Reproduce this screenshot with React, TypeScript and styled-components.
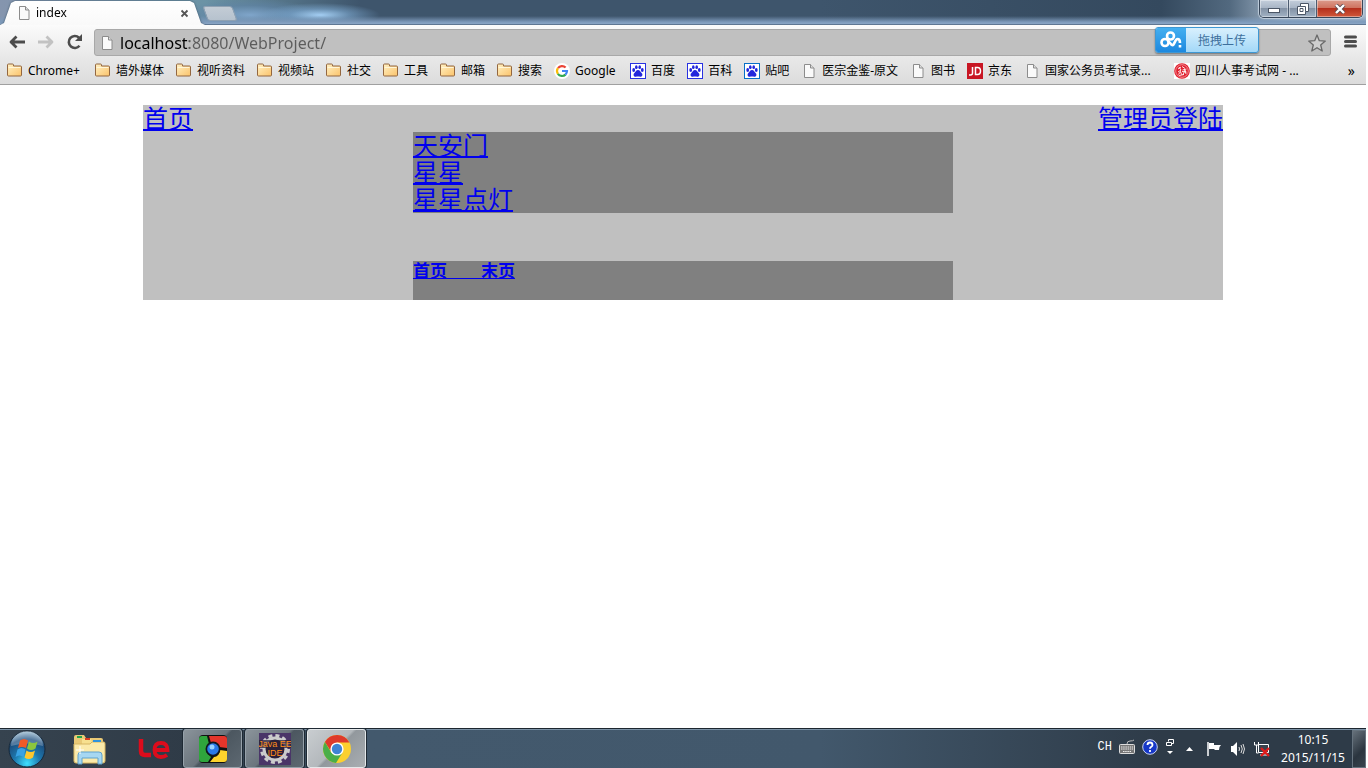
import React from "react";
import styled, { createGlobalStyle } from "styled-components";

const uiFont = '"Noto Sans", "Noto Sans CJK SC", sans-serif';

const GlobalStyle = createGlobalStyle`
  * { box-sizing: border-box; }
  body { margin: 0; background: #fff; font-family: ${uiFont}; font-size: 12px; color: #000; }
  button { font: inherit; color: inherit; padding: 0; border: 0; background: none; }
  svg { display: block; flex: none; }
`;

const Desktop = styled.div`
  display: flex;
  flex-direction: column;
  min-height: 100vh;
  padding-right: 2px;
`;

/* ---------- window frame ---------- */

const TitleBar = styled.header`
  display: flex;
  align-items: flex-end;
  height: 25px;
  background:
    linear-gradient(to bottom, transparent 16px, #7d9abb 22px, #8aa6c6 24px, #5f7793 24px),
    radial-gradient(ellipse 60px 12px at 320px 15px, #a3cdf2 0%, rgba(124, 168, 208, 0.6) 50%, transparent 100%),
    radial-gradient(ellipse 70px 16px at 250px 15px, #7fa5ca 0%, rgba(95, 131, 166, 0.6) 60%, transparent 100%),
    linear-gradient(to right, #8595ae 0, #6b93a5 205px, #3e556c 360px, #3e556c 60%, #34495e 85%, #52697f 90%, #a4b6c9 94%, #a9b9cb 100%);
`;

const TabShadow = styled.div`
  width: 205px;
  filter: drop-shadow(0 0 1px #3d5468);
`;

const Tab = styled.div`
  display: flex;
  align-items: center;
  height: 24px;
  padding: 0 16px;
  gap: 4px;
  background: linear-gradient(#fff, #f9f9f9);
  clip-path: polygon(0 100%, 4px 92%, 11px 8%, 15px 0, calc(100% - 15px) 0, calc(100% - 11px) 8%, calc(100% - 4px) 92%, 100% 100%);
`;

const TabTitle = styled.span`
  flex: 1;
  line-height: 16px;
`;

const NewTab = styled.button`
  width: 30px;
  height: 15px;
  margin-bottom: 4px;
  border-radius: 3px;
  border: 1px solid #8fa1b2;
  background: linear-gradient(#c3ccd5, #b6c2ce);
  transform: skewX(20deg);
`;

const WindowButtons = styled.div`
  display: flex;
  align-self: flex-start;
  margin: 0 3px 0 auto;
  height: 18px;
  border: 1px solid #38475a;
  border-top: 0;
  border-radius: 0 0 5px 5px;
  overflow: hidden;
  box-shadow: 0 0 1px 1px #c3d0de;
`;

const WindowButton = styled.button<{ $close?: boolean }>`
  display: flex;
  align-items: center;
  justify-content: center;
  width: ${(p) => (p.$close ? 46 : 28)}px;
  border-left: 1px solid #4c5c70;
  box-shadow: inset 0 0 0 1px rgba(255, 255, 255, 0.4);
  background: ${(p) =>
    p.$close
      ? "linear-gradient(#dc9c8c 0, #cf7460 45%, #b5301c 50%, #d0583a 100%)"
      : "linear-gradient(#c4cfdc 0, #a9b6c6 45%, #8392a5 50%, #a2b2c4 100%)"};
  &:first-child { border-left: 0; }
`;

/* ---------- toolbar ---------- */

const Toolbar = styled.div`
  position: relative;
  display: flex;
  align-items: center;
  height: 33px;
  padding: 0 9px 0 7px;
  background: linear-gradient(#fbfbfb, #e8e8e8);
`;

const NavButtons = styled.div`
  display: flex;
  gap: 9px;
  width: 87px;
`;

const IconButton = styled.button`
  display: flex;
  align-items: center;
  justify-content: center;
`;

const Omnibox = styled.label`
  display: flex;
  flex: 1;
  align-items: center;
  gap: 5px;
  height: 27px;
  padding: 0 4px;
  border: 1px solid #a8a8a8;
  border-radius: 3px;
  background: #c0c0c0;
  margin: 2px 13px 0 0;
`;

const UrlInput = styled.input`
  flex: 1;
  min-width: 0;
  height: 24px;
  padding: 0;
  border: 0;
  outline: 0;
  font: 16px/24px ${uiFont};
  color: transparent;
  caret-color: #000;
  background: linear-gradient(to right, #000 69px, #5c5c5c 69px);
  -webkit-background-clip: text;
  background-clip: text;
`;

const UploadButton = styled.button`
  position: absolute;
  top: 2px;
  right: 107px;
  display: flex;
  width: 104px;
  height: 26px;
  border: 1px solid #3e97d3;
  border-radius: 3px;
  overflow: hidden;
  box-shadow: 0 1px 2px rgba(0, 0, 0, 0.4);
  color: #3d6f9c;
  line-height: 26px;
  background: linear-gradient(#d9f0fd, #a3d8f8);
`;

const UploadLogo = styled.span`
  display: flex;
  align-items: center;
  justify-content: center;
  width: 30px;
  height: 100%;
  background: linear-gradient(#43aff0, #1c88df);
`;

const UploadText = styled.span`
  flex: 1;
`;

/* ---------- bookmarks ---------- */

const Bookmarks = styled.nav`
  display: flex;
  align-items: center;
  gap: 12px;
  height: 27px;
  padding: 0 11px 0 7px;
  border-bottom: 1px solid #a0a0a0;
  background: linear-gradient(#e8e8e8, #dcdcdc);
`;

const Bookmark = styled.a<{ $width?: number }>`
  display: flex;
  align-items: center;
  gap: 5px;
  flex: none;
  width: ${(p) => (p.$width ? `${p.$width}px` : "auto")};
  color: #000;
  text-decoration: none;
  line-height: 16px;
  white-space: nowrap;
`;

const More = styled.button`
  margin-left: auto;
  font-size: 14px;
  line-height: 16px;
`;

/* ---------- web page ---------- */

const Page = styled.main`
  flex: 1;
  padding: 20px 0;
`;

const Sheet = styled.div`
  width: 100%;
  max-width: 1080px;
  margin: 0 auto;
  background: #c0c0c0;
`;

const SheetHeader = styled.div`
  display: flex;
  justify-content: space-between;
  height: 27px;
`;

const PageLink = styled.a`
  color: #0000ee;
  font-family: "Noto Sans CJK SC", sans-serif;
  font-size: 25px;
  font-weight: 400;
  line-height: 25px;
  text-decoration-thickness: 2px;
  text-underline-offset: 1px;
`;

const Articles = styled.ul`
  width: 50%;
  margin: 0 auto 48px;
  padding: 0;
  list-style: none;
  background: #808080;
`;

const Article = styled.li`
  display: flex;
  align-items: flex-start;
  height: 27px;
`;

const Pager = styled.div`
  width: 50%;
  height: 39px;
  margin: 0 auto;
  background: #808080;
`;

const PagerLink = styled.a`
  display: block;
  color: #0000ee;
  font: bold 17px/17px "Noto Sans CJK SC", sans-serif;
  text-decoration-thickness: 1px;
  text-underline-offset: 1px;
`;

/* ---------- taskbar ---------- */

const Taskbar = styled.footer`
  display: flex;
  align-items: center;
  height: 40px;
  color: #fff;
  border-top: 1px solid #1c262f;
  background: linear-gradient(to right, #36434f 0, #2f3b47 190px, #43596d 370px, #42586c 60%, #2e3b48 85%, #2e3b48 100%);
  box-shadow: inset 0 1px 0 #7b92a6;
`;

const Launcher = styled.button<{ $w: number }>`
  display: flex;
  align-items: center;
  justify-content: center;
  width: ${(p) => p.$w}px;
  height: 39px;
`;

const TaskButton = styled.button<{ $active?: boolean }>`
  display: flex;
  align-items: center;
  justify-content: center;
  width: 59px;
  height: 39px;
  margin-right: 3px;
  border: 1px solid ${(p) => (p.$active ? "#e4e8ea" : "#96a1aa")};
  border-radius: 3px;
  box-shadow: 0 0 0 1px #1f2a34;
  background: ${(p) =>
    p.$active
      ? "linear-gradient(135deg, #c9cdd0 0, #b3b8bc 48%, #92989d 52%, #a9aeb2 100%)"
      : "linear-gradient(135deg, #8b949b 0, #6b757d 48%, #4c5760 52%, #5d6871 100%)"};
`;

const LanguageBar = styled.div`
  display: flex;
  align-items: center;
  gap: 7px;
  margin: 0 7px 4px auto;
  font: 12px/16px "Liberation Mono", monospace;
`;

const Tray = styled.div`
  display: flex;
  align-items: center;
  gap: 8px;
`;

const Clock = styled.time`
  width: 86px;
  text-align: center;
  line-height: 18px;
  margin-right: -4px;
`;

const ShowDesktop = styled.button`
  width: 14px;
  height: 38px;
  border: 1px solid #66737e;
  background: linear-gradient(135deg, #66717b, #2b353f 60%, #38434d);
`;

/* ---------- drawings ---------- */

const FileIcon = () => (
  <svg width="16" height="16" viewBox="0 0 16 16">
    <path d="M3.5 1.5h6l3.5 3.5v9.5h-9.500z" fill="#fafafa" stroke="#8c8c8c" />
    <path d="M9.500 1.500v3.500H13" fill="#ddd" stroke="#8c8c8c" />
  </svg>
);

const FolderIcon = () => (
  <svg width="16" height="16" viewBox="0 0 16 16">
    <defs>
      <linearGradient id="folder" x2="1" y2="1">
        <stop offset="0" stopColor="#fff1c4" />
        <stop offset="1" stopColor="#fbc36b" />
      </linearGradient>
    </defs>
    <path d="M.5 3V2q0-1 1-1h4q1 0 1 1v1h7q1 0 1 1v8q0 1-1 1h-12q-1 0-1-1z" fill="url(#folder)" stroke="#936740" />
    <path d="M1.500 4.500h12" stroke="#fff6d8" />
  </svg>
);

const GoogleIcon = () => (
  <svg width="16" height="16" viewBox="0 0 16 16">
    <circle cx="8" cy="8" r="8" fill="#fff" />
    <g fill="none" strokeWidth="2.200">
      <path d="M4 5.200A5 5 0 0 1 11.600 4.500" stroke="#ea4335" />
      <path d="M3.900 10.800A5 5 0 0 1 3.900 5.200" stroke="#fbbc05" />
      <path d="M11.500 11.600A5 5 0 0 1 3.900 10.800" stroke="#34a853" />
      <path d="M8 8h5A5 5 0 0 1 11.400 11.600" stroke="#4285f4" />
    </g>
  </svg>
);

const PawIcon = ({ edge = "#2932e1" }: { edge?: string }) => (
  <svg width="16" height="16" viewBox="0 0 16 16">
    <rect x=".5" y=".5" width="15" height="15" fill="#fff" stroke={edge} />
    <g fill="#2226dc">
      <ellipse cx="3.700" cy="7" rx="1.400" ry="1.900" />
      <ellipse cx="6.300" cy="4.200" rx="1.300" ry="1.900" />
      <ellipse cx="9.700" cy="4.200" rx="1.300" ry="1.900" />
      <ellipse cx="12.300" cy="7" rx="1.400" ry="1.900" />
      <path d="M8 7c2 0 2.500 2 3.800 3.200 1.400 1.600.2 3.800-1.600 3.600-1.500-.3-2.900-.3-4.400 0-1.800.2-3-2-1.600-3.600C5.500 9 6 7 8 7z" />
    </g>
  </svg>
);

const JdIcon = () => (
  <svg width="16" height="16" viewBox="0 0 16 16">
    <rect width="16" height="16" fill="#c81623" />
    <path d="M5.500 4v6q0 2-2 2H2M8.500 4.500v7h2q3 0 3-3.500t-3-3.500z" fill="none" stroke="#fff" strokeWidth="1.500" />
  </svg>
);

const SealIcon = () => (
  <svg width="16" height="16" viewBox="0 0 16 16">
    <rect width="16" height="16" fill="#fff" />
    <circle cx="8" cy="8" r="7.800" fill="#e01f2d" />
    <circle cx="8" cy="8" r="6.300" fill="none" stroke="#f7b9bd" strokeWidth=".7" />
    <path d="M4 6l3-2M5 4l2 3M4 9l3-2M4.500 11.500l2-3 1 3M8 3.500l3 2M8.500 7l4-1M8 8.500l4.500.5M9 12l2-5 1 4M5 12.500l5-1" fill="none" stroke="#fff" strokeWidth=".9" />
  </svg>
);

const BackIcon = ({ color, flip }: { color: string; flip?: boolean }) => (
  <svg width="20" height="20" viewBox="0 0 20 20">
    <path d={flip ? "M2 10h14M10.500 4.500 16 10l-5.500 5.500" : "M18 10H4M9.500 4.500 4 10l5.500 5.500"} fill="none" stroke={color} strokeWidth="2.800" strokeLinejoin="round" />
  </svg>
);

const ReloadIcon = () => (
  <svg width="20" height="20" viewBox="0 0 20 20">
    <path d="M14.500 13.800A6 6 0 1 1 14 5.700" fill="none" stroke="#4c4c4c" strokeWidth="2.600" />
    <path d="M17 2v7h-7z" fill="#4c4c4c" />
  </svg>
);

const StarIcon = () => (
  <svg width="18" height="18" viewBox="0 0 18 18">
    <path d="M9 1l2.300 5.700 6 .4-4.600 3.900 1.500 6L9 13.700 3.800 17l1.500-6L.7 7.100l6-.4z" fill="#cfcfcf" stroke="#696969" strokeWidth="1.300" strokeLinejoin="round" />
  </svg>
);

const MenuIcon = () => (
  <svg width="13" height="13" viewBox="0 0 13 13">
    <path d="M1.500 2h10M1.500 6.500h10M1.500 11h10" stroke="#4c4c4c" strokeWidth="3" strokeLinecap="round" />
  </svg>
);

const CloudIcon = () => (
  <svg width="22" height="18" viewBox="0 0 22 18" fill="none" stroke="#fff" strokeWidth="2.600">
    <circle cx="10.500" cy="5" r="3.500" />
    <circle cx="5" cy="11.500" r="3.500" />
    <path d="M7.800 9.500l4 4.500c2.500 1.500 3-6 5.700-6 1.800 0 2.500 1.500 2.500 4M20 14v2.400" />
  </svg>
);

const StartOrb = () => (
  <svg width="40" height="38" viewBox="0 0 40 38">
    <defs>
      <radialGradient id="orb" cx=".5" cy=".9" r=".9">
        <stop offset="0" stopColor="#3fe0ff" />
        <stop offset=".4" stopColor="#1d78ae" />
        <stop offset=".75" stopColor="#1c4d7d" />
        <stop offset="1" stopColor="#a3c3d6" />
      </radialGradient>
    </defs>
    <circle cx="20" cy="19" r="18" fill="url(#orb)" stroke="#16283a" />
    <path d="M4 16a16 15 0 0 1 32 0q-16-5-32 0z" fill="#fff" opacity=".25" />
    <path d="M13 10.500q4-3 8 0l-2 7.500q-4-2-8 0z" fill="#ef5a28" />
    <path d="M22 11.500q4 3 8.500 0l-2 7q-4.500 3-8.500 0z" fill="#8cc63e" />
    <path d="M10.500 19.500q4-3 8 0l-2 7.500q-4-3-8 0z" fill="#38a2e4" />
    <path d="M19.500 20.500q4 3 8.500 0l-2 7q-4.500 3-8.500 0z" fill="#fdc72e" />
  </svg>
);

const ExplorerIcon = () => (
  <svg width="34" height="32" viewBox="0 0 34 32">
    <path d="M2 4q0-2 2-2h8l2 3h15q2 0 2 2v20H2z" fill="#e9c976" />
    <path d="M10 6h9l1 3h11v18H10z" fill="#f7e08f" />
    <path d="M2 11h16l2-2h12q1 0 1 2v17q0 2-2 2H4q-2 0-2-2z" fill="#fbeaaa" stroke="#d7b662" />
    <path d="M5 4h5" stroke="#21a34a" strokeWidth="2" />
    <path d="M13 6h5" stroke="#d83b20" strokeWidth="2" />
    <path d="M21 8h8" stroke="#3093dc" strokeWidth="2" />
    <path d="M6 31V22q0-3 3-3h18q3 0 3 3v9h-4v-6H10v6z" fill="#a6d7f2" stroke="#5fa2ce" />
    <path d="M8 13v8M4 17h8" stroke="#fff" />
  </svg>
);

const LeIcon = () => (
  <svg width="32" height="22" viewBox="0 0 32 22" fill="none" stroke="#dc0c1c">
    <path d="M3 1v12q0 4 4 4h6" strokeWidth="4.500" />
    <path d="M16 12h13.500q0-7-6.500-7t-6.500 7 6.500 7q3.500 0 6-2" strokeWidth="3.800" />
  </svg>
);

const SquareBrowserIcon = () => (
  <svg width="30" height="30" viewBox="0 0 30 30">
    <rect x="1" y="1" width="28" height="28" rx="4" fill="#111" />
    <path d="M11 2h15q3 0 3 3v9l-8-1q-3-5-8-4z" fill="#e5352b" />
    <path d="M4 2h5l2 8q-5 4-2 9l4 4-3 5H4q-3 0-3-3V5q0-3 3-3z" fill="#2fa53c" />
    <path d="M22 16l7 1v8q0 3-3 3H12l4-5q5 0 6-7z" fill="#fdd32d" />
    <circle cx="15" cy="15" r="7.500" fill="#101820" />
    <circle cx="15" cy="15" r="5.800" fill="#2a79e8" />
    <circle cx="14" cy="13" r="2.500" fill="#9bd4ff" />
  </svg>
);

const EclipseIcon = () => (
  <svg width="32" height="32" viewBox="0 0 32 32">
    <rect width="32" height="32" fill="#4a3568" />
    <circle cx="16" cy="16" r="13.500" fill="none" stroke="#ccc" strokeWidth="3" strokeDasharray="4 3.070" />
    <circle cx="16" cy="16" r="11" fill="#2b2038" stroke="#ccc" strokeWidth="3" />
    <rect y="7" width="32" height="8" fill="#2b2038" opacity=".75" />
    <g fill="#ff8c1a" fontFamily="Liberation Sans, sans-serif" fontSize="9" textAnchor="middle">
      <text x="16" y="14">Java EE</text>
      <text x="16" y="23">IDE</text>
    </g>
  </svg>
);

const ChromeIcon = () => (
  <svg width="30" height="30" viewBox="0 0 30 30">
    <circle cx="15" cy="15" r="14" fill="#fbd02f" />
    <path d="M15 8.500h12.400A14 14 0 0 0 2.900 8L9.400 18z" fill="#de3a2c" />
    <path d="M2.900 8A14 14 0 0 0 14 29l6.500-10.500-11 .5z" fill="#4aae48" />
    <circle cx="15" cy="15" r="6.600" fill="#fff" />
    <circle cx="15" cy="15" r="5.200" fill="#3f83d3" />
  </svg>
);

const KeyboardIcon = () => (
  <svg width="16" height="16" viewBox="0 0 16 16">
    <path d="M8 5q0-3 3-3t4-1" fill="none" stroke="#bbb" />
    <rect x=".5" y="5.500" width="15" height="9" rx="1" fill="#777" stroke="#ddd" />
    <path d="M2 8h12M2 10h12M4 12.500h8" stroke="#eee" strokeDasharray="1.500 .7" />
  </svg>
);

const HelpIcon = () => (
  <svg width="16" height="16" viewBox="0 0 16 16">
    <circle cx="8" cy="8" r="7.300" fill="#1637c8" stroke="#c7d1f0" />
    <path d="M5.500 6q0-2.500 2.500-2.500T10.500 6q0 1.200-1.500 2-1 .6-1 1.800M8 11v2" fill="none" stroke="#fff" strokeWidth="1.800" />
  </svg>
);

const RestoreIcon = () => (
  <svg width="10" height="16" viewBox="0 0 10 16">
    <path d="M3.500 2.500v-2h5v4h-2M1.500 3.500h5v3h-5z" fill="none" stroke="#fff" />
    <path d="M2 12h6l-3 3z" fill="#fff" />
  </svg>
);

const HiddenIconsArrow = () => (
  <svg width="16" height="16" viewBox="0 0 16 16">
    <path d="M4 10h7l-3.500-4z" fill="#fff" />
  </svg>
);

const FlagIcon = () => (
  <svg width="16" height="16" viewBox="0 0 16 16">
    <path d="M2 1v14" stroke="#fff" strokeWidth="1.500" />
    <path d="M3 2h5v2h7l-1.500 2L13 9H9L8 8H3z" fill="#fff" />
  </svg>
);

const SpeakerIcon = () => (
  <svg width="16" height="16" viewBox="0 0 16 16">
    <path d="M1 5h2l4-4v14l-4-4H1z" fill="#fff" />
    <path d="M9 6q1 2 0 4M11 4q2.500 4 0 8M13 3q3 5 0 10" fill="none" stroke="#ddd" />
  </svg>
);

const NetworkIcon = () => (
  <svg width="16" height="16" viewBox="0 0 16 16">
    <path d="M.5 1v3h4V1M2.500 4v8h2" fill="none" stroke="#fff" />
    <path d="M4.500 3.500h10v8h-10zM6 14h7" fill="#39444f" stroke="#fff" />
    <path d="M7 7l8 8M15 7l-8 8" stroke="#e11b1b" strokeWidth="2.400" />
  </svg>
);

type BookmarkItem = { label: string; icon: React.ReactNode; width?: number };

const folders: BookmarkItem[] = [
  { label: "Chrome+", icon: <FolderIcon />, width: 76 },
  ...["墙外媒体", "视听资料", "视频站", "社交", "工具", "邮箱", "搜索"].map((label) => ({ label, icon: <FolderIcon /> })),
];

const sites: BookmarkItem[] = [
  { label: "Google", icon: <GoogleIcon />, width: 64 },
  { label: "百度", icon: <PawIcon /> },
  { label: "百科", icon: <PawIcon /> },
  { label: "贴吧", icon: <PawIcon edge="#0870c8" /> },
  { label: "医宗金鉴-原文", icon: <FileIcon /> },
  { label: "图书", icon: <FileIcon /> },
  { label: "京东", icon: <JdIcon /> },
  { label: "国家公务员考试录...", icon: <FileIcon />, width: 138 },
  { label: "四川人事考试网 - ...", icon: <SealIcon /> },
];

const articles = ["天安门", "星星", "星星点灯"];

export default function App() {
  return (
    <Desktop>
      <GlobalStyle />
      <TitleBar>
        <TabShadow>
          <Tab>
            <FileIcon />
            <TabTitle>index</TabTitle>
            <IconButton aria-label="Close tab">
              <svg width="9" height="9" viewBox="0 0 9 9">
                <path d="M1.500 1.500l6 6M7.500 1.500l-6 6" stroke="#555" strokeWidth="1.800" />
              </svg>
            </IconButton>
          </Tab>
        </TabShadow>
        <NewTab aria-label="New tab" />
        <WindowButtons>
          <WindowButton aria-label="Minimize">
            <svg width="12" height="10" viewBox="0 0 12 10">
              <rect x=".5" y="4.500" width="11" height="4" fill="#fff" stroke="#4b5666" />
            </svg>
          </WindowButton>
          <WindowButton aria-label="Restore">
            <svg width="12" height="12" viewBox="0 0 12 12">
              <path d="M3.500.5h8v8h-3v3h-8v-8h3z" fill="#fff" stroke="#4b5666" />
              <path d="M3 5.500h3v3H3zM3.500 3.500h5v5" fill="none" stroke="#4b5666" />
            </svg>
          </WindowButton>
          <WindowButton $close aria-label="Close">
            <svg width="12" height="10" viewBox="0 0 12 10">
              <path d="M2 1l8 8M10 1L2 9" stroke="#5a4a50" strokeWidth="4" />
              <path d="M2 1l8 8M10 1L2 9" stroke="#fff" strokeWidth="2.400" />
            </svg>
          </WindowButton>
        </WindowButtons>
      </TitleBar>

      <Toolbar>
        <NavButtons>
          <IconButton aria-label="Back"><BackIcon color="#4c4c4c" /></IconButton>
          <IconButton aria-label="Forward"><BackIcon color="#c2c2c2" flip /></IconButton>
          <IconButton aria-label="Reload"><ReloadIcon /></IconButton>
        </NavButtons>
        <Omnibox>
          <FileIcon />
          <UrlInput aria-label="Address" type="text" defaultValue="localhost:8080/WebProject/" />
          <StarIcon />
        </Omnibox>
        <IconButton aria-label="Menu"><MenuIcon /></IconButton>
        <UploadButton>
          <UploadLogo><CloudIcon /></UploadLogo>
          <UploadText>拖拽上传</UploadText>
        </UploadButton>
      </Toolbar>

      <Bookmarks>
        {[...folders, ...sites].map((b) => (
          <Bookmark href="#" key={b.label} $width={b.width}>{b.icon}{b.label}</Bookmark>
        ))}
        <More aria-label="More bookmarks">»</More>
      </Bookmarks>

      <Page>
        <Sheet>
          <SheetHeader>
            <PageLink href="#">首页</PageLink>
            <PageLink href="#">管理员登陆</PageLink>
          </SheetHeader>
          <Articles>
            {articles.map((title) => (
              <Article key={title}><PageLink href="#">{title}</PageLink></Article>
            ))}
          </Articles>
          <Pager>
            <PagerLink href="#">首页{"\u3000\u3000"}末页</PagerLink>
          </Pager>
        </Sheet>
      </Page>

      <Taskbar>
        <Launcher $w={54} aria-label="Start"><StartOrb /></Launcher>
        <Launcher $w={70} aria-label="Explorer"><ExplorerIcon /></Launcher>
        <Launcher $w={59} aria-label="Le"><LeIcon /></Launcher>
        <TaskButton aria-label="Browser"><SquareBrowserIcon /></TaskButton>
        <TaskButton aria-label="Java EE IDE"><EclipseIcon /></TaskButton>
        <TaskButton $active aria-label="Chrome"><ChromeIcon /></TaskButton>
        <LanguageBar>
          <span>CH</span>
          <KeyboardIcon />
          <HelpIcon />
          <RestoreIcon />
        </LanguageBar>
        <Tray>
          <HiddenIconsArrow />
          <FlagIcon />
          <SpeakerIcon />
          <NetworkIcon />
        </Tray>
        <Clock>10:15<br />2015/11/15</Clock>
        <ShowDesktop aria-label="Show desktop" />
      </Taskbar>
    </Desktop>
  );
}
